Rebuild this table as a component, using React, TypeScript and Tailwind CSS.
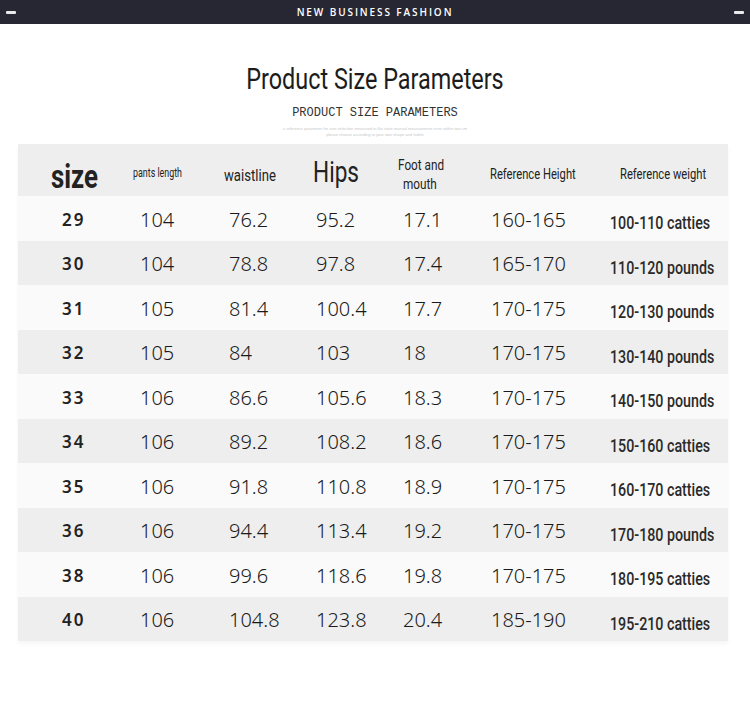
import React from "react";

const rows = [
  ["29", "104", "76.2", "95.2", "17.1", "160-165", "100-110 catties"],
  ["30", "104", "78.8", "97.8", "17.4", "165-170", "110-120 pounds"],
  ["31", "105", "81.4", "100.4", "17.7", "170-175", "120-130 pounds"],
  ["32", "105", "84", "103", "18", "170-175", "130-140 pounds"],
  ["33", "106", "86.6", "105.6", "18.3", "170-175", "140-150 pounds"],
  ["34", "106", "89.2", "108.2", "18.6", "170-175", "150-160 catties"],
  ["35", "106", "91.8", "110.8", "18.9", "170-175", "160-170 catties"],
  ["36", "106", "94.4", "113.4", "19.2", "170-175", "170-180 pounds"],
  ["38", "106", "99.6", "118.6", "19.8", "170-175", "180-195 catties"],
  ["40", "106", "104.8", "123.8", "20.4", "185-190", "195-210 catties"],
];

// no condensed face installed, so Roboto squeezed horizontally
const cond = "inline-block whitespace-nowrap origin-left font-['Roboto',sans-serif]";
const cols = "grid grid-cols-[112px_89px_88px_86px_91px_115px_129px]";

const Dash = () => <span className="block w-[10px] h-[3px] bg-white/90 rounded-[1px]" />;

export default function App() {
  return (
    <div className="w-[750px] h-[703px] bg-white overflow-hidden">
      <div className="h-[24px] bg-[#262733] flex items-center justify-between px-[6px]">
        <Dash />
        <span className="text-white text-[10px] tracking-[0.19em] font-['Open_Sans',sans-serif] font-semibold">NEW BUSINESS FASHION</span>
        <Dash />
      </div>

      <div className="flex flex-col items-center pt-[38px]">
        <h1 className="inline-block whitespace-nowrap font-['Roboto',sans-serif] text-[30px] leading-[34px] text-[#1c1c1c] scale-x-[0.78]">Product Size Parameters</h1>
        <p className="mt-[10px] font-['Liberation_Mono',monospace] text-[12px] leading-[14px] text-[#333]">PRODUCT SIZE PARAMETERS</p>
        <div className="mt-[6px] w-[220px] text-center text-[#c8c8c8] font-['Liberation_Sans',sans-serif] text-[4px] leading-[6px]">
          a reference parameter for size selection measured in flat state manual measurement error within two cm<br />
          please choose according to your own shape and habits
        </div>
      </div>

      <div className="mx-[18px] mt-[6px] w-[710px] shadow-[0_3px_4px_rgba(0,0,0,0.04)]">
        <div className={`${cols} h-[52px] bg-[#eeeeee] items-center text-[#222]`}>
          <span className="pl-[33px] pt-[12px]"><span className={`${cond} text-[34px] font-bold leading-none scale-x-[0.76]`}>size</span></span>
          <span className="pl-[3px] pt-[2px]"><span className={`${cond} text-[12px] scale-x-[0.74]`}>pants length</span></span>
          <span className="pl-[5px] pt-[10px]"><span className={`${cond} text-[16px] scale-x-[0.82]`}>waistline</span></span>
          <span className="pl-[6px] pt-[6px]"><span className={`${cond} text-[29px] leading-none scale-x-[0.78]`}>Hips</span></span>
          <span className="pl-[5px] pt-[10px]"><span className={`${cond} text-[14px] leading-[19px] scale-x-[0.84] text-center w-[52px]`}>Foot and<br />mouth</span></span>
          <span className="pl-[6px] pt-[6px]"><span className={`${cond} text-[14px] scale-x-[0.8]`}>Reference Height</span></span>
          <span className="pl-[21px] pt-[6px]"><span className={`${cond} text-[14px] scale-x-[0.8]`}>Reference weight</span></span>
        </div>
        {rows.map((r, i) => (
          <div key={r[0]} className={`${cols} h-[44.5px] items-center ${i % 2 === 1 ? "bg-[#eeeeee]" : "bg-[#fafafa]"} text-[#1a1a1a]`}>
            <span className="pl-[44px] pt-[2px] font-['Noto_Sans',sans-serif] font-semibold text-[17px] tracking-[0.12em] text-[#222]">{r[0]}</span>
            {r.slice(1, 6).map((v, j) => (
              <span key={j} className={`pt-[3px] font-['Noto_Sans',sans-serif] text-[20px] font-light ${["pl-[10px]", "pl-[10px]", "pl-[9px]", "pl-[10px]", "pl-[7px]"][j]}`}>{v}</span>
            ))}
            <span className="pl-[11px] pt-[10px]"><span className={`${cond} font-medium text-[19px] scale-x-[0.75] text-[#2a2a2a]`}>{r[6]}</span></span>
          </div>
        ))}
      </div>
    </div>
  );
}
